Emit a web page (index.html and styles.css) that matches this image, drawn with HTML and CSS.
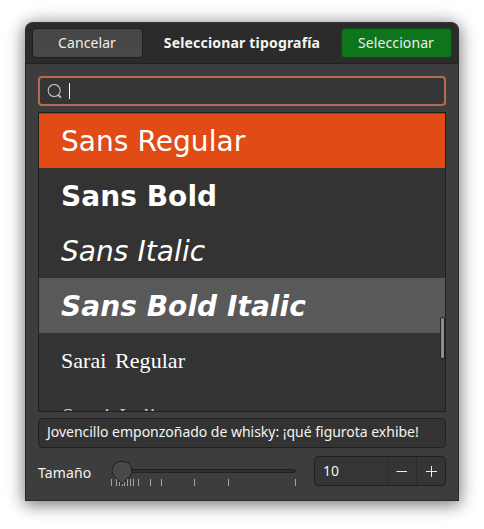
FILE: index.html
```
<!DOCTYPE html>
<html lang="es">
<head>
<meta charset="utf-8">
<title>Seleccionar tipografía</title>
<link rel="stylesheet" href="styles.css">
</head>
<body>
<div class="dialog">
  <header class="header">
    <button class="btn">Cancelar</button>
    <h1 class="title">Seleccionar tipografía</h1>
    <button class="btn suggested">Seleccionar</button>
  </header>
  <main class="content">
    <div class="search">
      <svg class="search-icon" width="16" height="16" viewBox="0 0 16 16"><circle cx="7.2" cy="6.5" r="6"/><path d="M11 10.8L14 13.6" stroke-width="1.8"/></svg>
      <span class="caret"></span>
    </div>
    <div class="list">
      <div class="row selected"><span class="regular">Sans Regular</span></div>
      <div class="row"><span class="bold">Sans Bold</span></div>
      <div class="row"><span class="italic">Sans Italic</span></div>
      <div class="row hover"><span class="bold-italic">Sans Bold Italic</span></div>
      <div class="row serif"><span>Sarai&nbsp; Regular</span></div>
      <div class="row serif last"><span class="italic-serif">Sarai&nbsp; Italic</span></div>
      <span class="scrollbar"></span>
    </div>
    <div class="preview"><span>Jovencillo emponzoñado de whisky: ¡qué figurota exhibe!</span></div>
    <div class="size">
      <label class="size-label">Tamaño</label>
      <svg class="slider" width="190" height="30" viewBox="0 0 190 30">
        <rect class="trough" x="3.5" y="13.5" width="184" height="3" rx="1.5"/>
        <path d="M3.5 14v2" stroke="#8b3b78"/>
        <path class="ticks" d="M3.5 23v7M8.5 23v7M11.5 23v7M14.5 23v7M16.5 23v7M19.5 23v7M22.5 23v7M25.5 23v7M30.5 23v7M42.5 23v7M53.5 23v7M86.5 23v7M120.5 23v7M187.5 23v7"/>
        <path class="knob" d="M14 28L7.2 21.3C2.5 17 3.5 10 8 7C11.6 4.9 16.4 4.9 20 7C24.5 10 25.5 17 20.8 21.3Z"/>
      </svg>
      <div class="spin">
        <span class="value">10</span>
        <span class="step"><svg width="12" height="12" viewBox="0 0 12 12"><path d="M.5 6.5h10.5"/></svg></span>
        <span class="step"><svg width="12" height="12" viewBox="0 0 12 12"><path d="M1 6.5h11M6.5 1v11"/></svg></span>
      </div>
    </div>
  </main>
</div>
</body>
</html>
```
FILE: styles.css
```
* { box-sizing: border-box; }
body {
  margin: 0;
  padding: 22px 25px 28px;
  height: 529px;
  overflow: hidden;
  background: #fff;
  color: #f4f4f2;
  font: 14px/20px "Noto Sans", sans-serif;
}
.dialog {
  width: 434px;
  height: 479px;
  border: 1px solid #2a2a2a;
  border-top-color: #383838;
  border-radius: 8px 8px 0 0;
  background: #3d3d3d;
  box-shadow: 0 3px 16px 1px rgba(0,0,0,.48), 0 0 24px rgba(0,0,0,.1);
}
.header {
  display: flex;
  align-items: center;
  justify-content: space-between;
  height: 41px;
  padding: 0 6px 1px 6px;
  border-bottom: 1px solid #202020;
  border-radius: 7px 7px 0 0;
  background: #2b2b2b;
}
.btn {
  width: 111px;
  height: 30px;
  padding: 0 1px 0 0;
  border: 1px solid #202020;
  border-radius: 4px;
  background: linear-gradient(#464646, #494949);
  color: #eeeeec;
  font: 14px/20px "Noto Sans", sans-serif;
  letter-spacing: .1px;
}
.suggested { border-color: #0c4d16; background: #0e751c; }
.title { margin: 0; font-size: 14px; font-weight: 700; letter-spacing: .18px; }
.content {
  display: flex;
  flex-direction: column;
  gap: 6px;
  padding: 12px 12px 0;
}
.search {
  display: flex;
  align-items: center;
  height: 30px;
  padding-left: 7px;
  border: 2px solid #b8694f;
  border-radius: 4px;
  background: #353535;
}
.search-icon { margin-top: 1px; fill: none; stroke: #c2c2c2; stroke-width: 1.1; }
.caret { width: 1px; height: 16px; margin: -1px 0 0 6px; background: #fff; }
.list {
  position: relative;
  height: 300px;
  overflow: hidden;
  border: 1px solid #202020;
  background: #333;
}
.row {
  display: flex;
  align-items: center;
  height: 55px;
  padding: 2px 0 0 22px;
  color: #fff;
  font: 28px/32px "DejaVu Sans", sans-serif;
  letter-spacing: .06px;
  white-space: nowrap;
}
.selected { background: #e04b16; box-shadow: inset 0 1px #ad3c14; }
.hover { background: #595959; }
.bold, .bold-italic { font-weight: 700; }
.italic, .bold-italic { font-style: italic; }
.serif { padding-top: 0; font: 22px/26px "Liberation Serif", serif; letter-spacing: .06px; word-spacing: -1.3px; }
.last { color: #c4c4c4; }
.italic-serif { font-style: italic; }
.scrollbar {
  position: absolute;
  right: 0;
  top: 204px;
  width: 5px;
  height: 42px;
  border: 1px solid #222;
  border-radius: 2px;
  background: #8c8c8c;
}
.preview {
  display: flex;
  align-items: center;
  height: 30px;
  padding: 0 0 2px 8px;
  border: 1px solid #202020;
  border-radius: 4px;
  background: #333;
  letter-spacing: -.02px;
  white-space: nowrap;
}
.size {
  display: flex;
  align-items: center;
  height: 30px;
  margin-top: 2px;
}
.size-label { width: 70px; padding-top: 4px; letter-spacing: .15px; }
.slider { flex: none; fill: none; }
.trough { fill: #303030; stroke: #202020; }
.ticks { stroke: #a5a5a3; }
.knob { fill: #484848; stroke: #1c1c1c; }
.spin {
  display: flex;
  width: 132px;
  height: 30px;
  margin-left: auto;
  border: 1px solid #202020;
  border-radius: 4px;
  background: #353535;
}
.value { flex: 1; padding-left: 8px; line-height: 28px; }
.step {
  display: flex;
  align-items: center;
  justify-content: center;
  width: 29px;
  border-left: 1px solid #2b2b2b;
}
.step svg { fill: none; stroke: #eee; }
```
